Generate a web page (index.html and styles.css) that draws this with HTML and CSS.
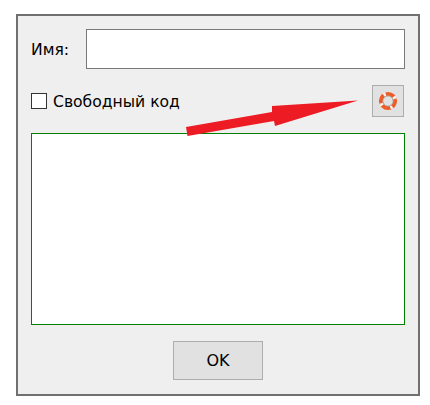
FILE: index.html
```html
<!DOCTYPE html>
<html lang="en">
<head>
    <meta charset="UTF-8"/>
    <title>Имя</title>
    <link rel="stylesheet" href="styles.css">
</head>
<body>

<div class="dialog">
    <div class="name-row">
        <label for="name">Имя:</label>
        <input id="name" type="text"/>
    </div>

    <div class="code-row">
        <label class="free-code"><span class="check"></span> <span class="free-text">Свободный код</span></label>
        <button class="help" type="button" aria-label="Help">
            <svg width="22" height="22" viewBox="0 0 22 22">
                <circle cx="11" cy="11" r="7.2" fill="none" stroke="#ee5c28" stroke-width="3.8"/>
                <circle cx="11" cy="11" r="7.2" fill="none" stroke="#f8f3ee" stroke-width="3.8" stroke-dasharray="2.4 8.9" transform="rotate(52 11 11)"/>
                <circle cx="11" cy="11" r="5.1" fill="none" stroke="#9a9a92" stroke-width="0.7"/>
            </svg>
        </button>
    </div>

    <textarea class="code-box"></textarea>

    <div class="actions">
        <button class="ok" type="button">OK</button>
    </div>
</div>

<!-- red arrow drawn over the dialog -->
<svg class="arrow" width="430" height="405" viewBox="0 0 430 405">
    <polygon fill="#ed1c24" points="186,127 272,112 272,106 358,100.5 275,126 274,121 187.5,136"/>
</svg>

</body>
</html>
```

FILE: styles.css
```css
html, body {
  margin: 0;
  background: white;
}
body {
  width: 430px;
  height: 405px;
  overflow: hidden;
  padding-top: 14px;
  padding-left: 16px;
  box-sizing: border-box;
  font-family: "DejaVu Sans", Tahoma, sans-serif;
  font-size: 15.6px;
  color: black;
}
.dialog {
  width: 404px;
  height: 382px;
  box-sizing: border-box;
  border: 2px solid #707070;
  background: #efefef;
  padding: 13px 13px 0 13px;
}
.name-row {
  display: flex;
  align-items: center;
  height: 40px;
}
.name-row label {
  width: 55px;
  padding-top: 2px;
}
.name-row input {
  width: 319px;
  height: 40px;
  box-sizing: border-box;
  border: 1px solid #7a7a7a;
  background: white;
  margin: 0;
  padding: 0 4px;
}
.code-row {
  display: flex;
  align-items: center;
  justify-content: space-between;
  height: 32px;
  margin-top: 16px;
  padding-right: 1px;
}
.free-code {
  display: flex;
  align-items: center;
  gap: 6px;
}
.free-text {
  padding-top: 2px;
}
.check {
  width: 16px;
  height: 16px;
  box-sizing: border-box;
  border: 1px solid #333;
  background: white;
}
.help {
  width: 32px;
  height: 32px;
  box-sizing: border-box;
  padding: 0;
  border: 1px solid #adadad;
  background: #e1e1e1;
  display: flex;
  align-items: center;
  justify-content: center;
}
.code-box {
  display: block;
  width: 374px;
  height: 192px;
  box-sizing: border-box;
  margin: 16px 0 0 0;
  border: 1px solid green;
  background: white;
  resize: none;
  outline: none;
}
.actions {
  display: flex;
  justify-content: center;
  margin-top: 16px;
}
.ok {
  width: 90px;
  height: 39px;
  box-sizing: border-box;
  border: 1px solid #adadad;
  background: #e1e1e1;
  font-family: inherit;
  font-size: 16px;
  color: black;
  padding: 0;
}
.arrow {
  position: absolute;
  left: 0;
  top: 0;
  pointer-events: none;
}
```
